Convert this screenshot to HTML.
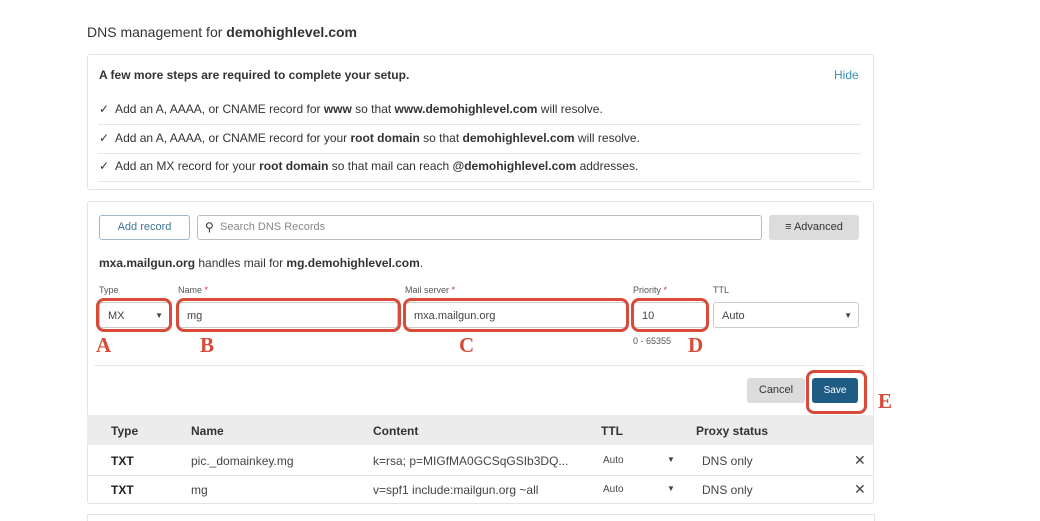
<!DOCTYPE html><html><head><style>
body{margin:0;width:1040px;height:518px;background:#fff;font-family:"Liberation Sans",sans-serif;color:#222;position:relative;overflow:hidden}
.a{position:absolute}
.box{position:absolute;border:1px solid #e3e3e3;border-radius:3px;background:#fff}
.row{position:absolute;left:99px;font-size:12px;color:#333}
.sep{position:absolute;left:98px;width:763px;height:1px;background:#e6e6e6}
.lbl{position:absolute;top:285px;font-size:9px;color:#555}
.in{position:absolute;top:302px;height:26px;border:1px solid #ccc;border-radius:3px;font-size:11px;color:#444;line-height:26px;padding-left:8px;box-sizing:border-box;background:#fff}
.red{position:absolute;border:3px solid #d94a38;border-radius:8px;box-sizing:border-box}
.L{position:absolute;font-family:"Liberation Serif",serif;font-weight:bold;color:#d94a38;font-size:21px}
.th{position:absolute;top:424px;font-size:12px;font-weight:bold;color:#333}
.td{position:absolute;font-size:12px;color:#444}
</style></head><body>
<div class="a" style="left:87px;top:24px;font-size:14px;color:#333">DNS management for <b>demohighlevel.com</b></div>
<div class="box" style="left:87px;top:54px;width:785px;height:134px"></div>
<div class="a" style="left:99px;top:68px;font-size:12px;color:#333;font-weight:bold;font-weight:600">A few more steps are required to complete your setup.</div>
<div class="a" style="left:834px;top:68px;font-size:12px;color:#3a8fb7">Hide</div>
<div class="row" style="top:102px">✓&nbsp; Add an A, AAAA, or CNAME record for <b>www</b> so that <b>www.demohighlevel.com</b> will resolve.</div>
<div class="sep" style="top:124px"></div>
<div class="row" style="top:131px">✓&nbsp; Add an A, AAAA, or CNAME record for your <b>root domain</b> so that <b>demohighlevel.com</b> will resolve.</div>
<div class="sep" style="top:153px"></div>
<div class="row" style="top:159px">✓&nbsp; Add an MX record for your <b>root domain</b> so that mail can reach <b>@demohighlevel.com</b> addresses.</div>
<div class="sep" style="top:181px"></div>

<div class="box" style="left:87px;top:201px;width:785px;height:301px"></div>
<div class="a" style="left:99px;top:215px;width:91px;height:25px;border:1px solid #9fb9c6;border-radius:3px;box-sizing:border-box;font-size:11px;color:#3d7797;text-align:center;line-height:23px">Add record</div>
<div class="a" style="left:197px;top:215px;width:565px;height:25px;border:1px solid #bbb;border-radius:3px;box-sizing:border-box;font-size:11px;color:#888;line-height:23px;padding-left:22px">Search DNS Records</div>
<div class="a" style="left:205px;top:220px;font-size:12px;color:#333">&#9906;</div>
<div class="a" style="left:769px;top:215px;width:90px;height:25px;background:#dcdcdc;border-radius:3px;font-size:11px;color:#333;line-height:25px;text-align:center">&#8801; Advanced</div>
<div class="a" style="left:99px;top:256px;font-size:12px;color:#333"><b>mxa.mailgun.org</b> handles mail for <b>mg.demohighlevel.com</b>.</div>
<div class="lbl" style="left:99px">Type</div>
<div class="lbl" style="left:178px">Name <span style="color:#c33">*</span></div>
<div class="lbl" style="left:405px">Mail server <span style="color:#c33">*</span></div>
<div class="lbl" style="left:633px">Priority <span style="color:#c33">*</span></div>
<div class="lbl" style="left:713px">TTL</div>
<div class="in" style="left:99px;width:71px">MX<span style="position:absolute;right:6px;font-size:8px">▼</span></div>
<div class="in" style="left:178px;width:220px">mg</div>
<div class="in" style="left:405px;width:222px">mxa.mailgun.org</div>
<div class="in" style="left:633px;width:74px">10</div>
<div class="in" style="left:713px;width:146px">Auto<span style="position:absolute;right:6px;font-size:8px">▼</span></div>
<div class="red" style="left:96px;top:298px;width:76px;height:34px"></div>
<div class="red" style="left:176px;top:298px;width:225px;height:34px"></div>
<div class="red" style="left:403px;top:298px;width:226px;height:34px"></div>
<div class="red" style="left:631px;top:298px;width:78px;height:34px"></div>
<div class="L" style="left:96px;top:333px">A</div>
<div class="L" style="left:200px;top:333px">B</div>
<div class="L" style="left:459px;top:333px">C</div>
<div class="L" style="left:688px;top:333px">D</div>
<div class="a" style="left:633px;top:336px;font-size:9px;color:#555">0 - 65355</div>
<div class="a" style="left:94px;top:365px;width:771px;height:1px;background:#e6e6e6"></div>
<div class="a" style="left:747px;top:378px;width:58px;height:25px;background:#dcdcdc;border-radius:3px;font-size:11px;color:#333;line-height:25px;text-align:center">Cancel</div>
<div class="a" style="left:812px;top:378px;width:46px;height:25px;background:#1f5c85;border-radius:3px;font-size:10px;color:#fff;line-height:25px;text-align:center">Save</div>
<div class="red" style="left:806px;top:370px;width:61px;height:44px"></div>
<div class="L" style="left:878px;top:389px">E</div>
<div class="a" style="left:87px;top:415px;width:786px;height:30px;background:#ececec"></div>
<div class="th" style="left:111px">Type</div><div class="th" style="left:191px">Name</div><div class="th" style="left:373px">Content</div><div class="th" style="left:601px">TTL</div><div class="th" style="left:696px">Proxy status</div>
<div class="td" style="left:111px;top:454px;font-weight:bold;color:#222">TXT</div><div class="td" style="left:191px;top:454px">pic._domainkey.mg</div><div class="td" style="left:373px;top:454px">k=rsa; p=MIGfMA0GCSqGSIb3DQ...</div><div class="td" style="left:603px;top:455px;font-size:10px">Auto</div><div class="td" style="left:667px;top:455px;font-size:8px">▼</div><div class="td" style="left:702px;top:454px">DNS only</div><div class="td" style="left:854px;top:452px;font-size:14px">✕</div>
<div class="a" style="left:87px;top:475px;width:786px;height:1px;background:#e3e3e3"></div>
<div class="td" style="left:111px;top:483px;font-weight:bold;color:#222">TXT</div><div class="td" style="left:191px;top:483px">mg</div><div class="td" style="left:373px;top:483px">v=spf1 include:mailgun.org ~all</div><div class="td" style="left:603px;top:484px;font-size:10px">Auto</div><div class="td" style="left:667px;top:484px;font-size:8px">▼</div><div class="td" style="left:702px;top:483px">DNS only</div><div class="td" style="left:854px;top:481px;font-size:14px">✕</div>
<div class="a" style="left:87px;top:514px;width:786px;height:6px;border:1px solid #e3e3e3;border-bottom:none"></div>
</body></html>
